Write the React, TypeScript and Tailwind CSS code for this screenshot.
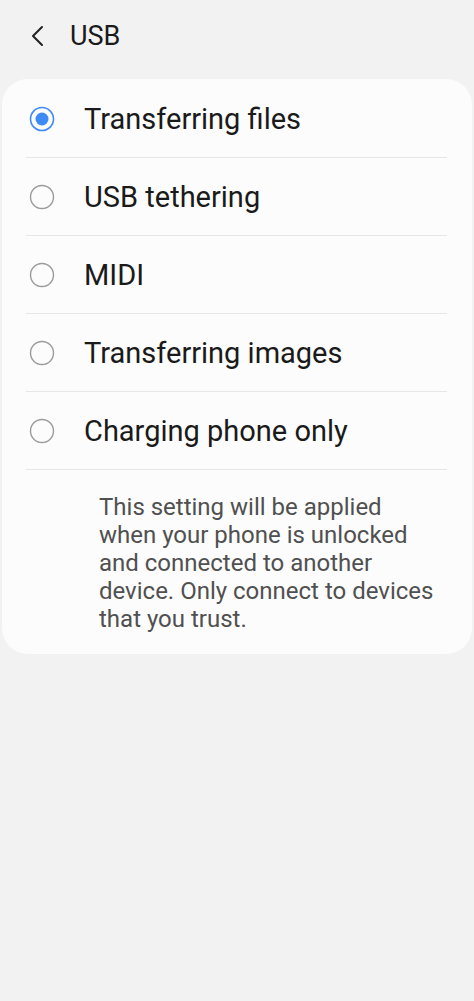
import React from "react";

const options = [
  { label: "Transferring files", checked: true },
  { label: "USB tethering", checked: false },
  { label: "MIDI", checked: false },
  { label: "Transferring images", checked: false },
  { label: "Charging phone only", checked: false },
];

function Radio({ checked }: { checked: boolean }) {
  return (
    <svg width="28" height="28" viewBox="0 0 28 28" className="shrink-0">
      {checked ? (
        <>
          <circle cx="14" cy="14" r="11.5" fill="none" stroke="#3e8af7" strokeWidth="1.6" />
          <circle cx="14" cy="14" r="6.5" fill="#3e8af7" />
        </>
      ) : (
        <circle cx="14" cy="14" r="11.5" fill="none" stroke="#9a9a9a" strokeWidth="1.4" />
      )}
    </svg>
  );
}

export default function App() {
  return (
    <div
      className="w-[474px] h-[1001px] bg-[#f2f2f2] text-[#1a1a1a]"
      style={{ fontFamily: "Roboto, 'Noto Sans', sans-serif" }}
    >
      <header className="flex items-center h-[72px] pl-[28px]">
        <svg width="20" height="24" viewBox="0 0 20 24" className="mr-[22px]">
          <path d="M14 3 L5 12 L14 21" fill="none" stroke="#222" strokeWidth="2" strokeLinecap="round" strokeLinejoin="round" />
        </svg>
        <span className="text-[27px] leading-none">USB</span>
      </header>

      <div className="mx-[2px] mt-[7px] rounded-[26px] bg-[#fcfcfc] px-[22px] pt-[1px] pb-[21px]">
        {options.map((o) => (
          <div
            key={o.label}
            className="flex items-center h-[78px] border-b border-[#e6e6e6] ml-[2px] mr-[3px]"
          >
            <div className="w-[58px] pl-[2px]">
              <Radio checked={o.checked} />
            </div>
            <span className="text-[29px] leading-none pt-[1px]">{o.label}</span>
          </div>
        ))}
        <p className="pl-[75px] pr-[10px] pt-[23px] text-[24px] leading-[28px] text-[#505050]">
          This setting will be applied when your phone is unlocked and connected to another device. Only connect to devices that you trust.
        </p>
      </div>
    </div>
  );
}
